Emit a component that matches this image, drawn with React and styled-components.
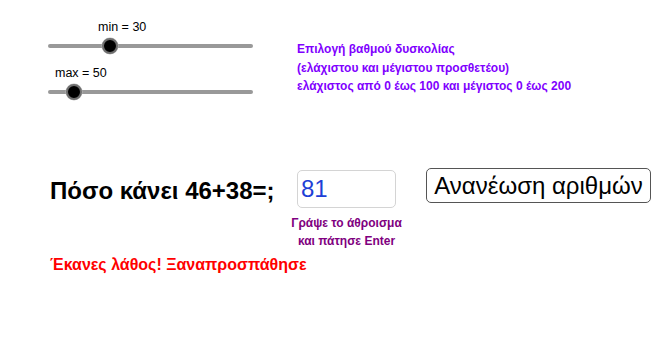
import React from "react";
import styled, { createGlobalStyle } from "styled-components";

const GlobalStyle = createGlobalStyle`
  html, body { margin: 0; padding: 0; background: #ffffff; }
  body { font-family: "Liberation Sans", Arial, sans-serif; }
`;

const Page = styled.div`
  width: 671px;
  height: 349px;
  overflow: hidden;
  background: #fff;
  color: #000;
`;

const TopRow = styled.div`
  display: flex;
  align-items: flex-start;
  height: 168px;
  box-sizing: border-box;
  padding-top: 20px;
`;

const SliderPanel = styled.div`
  display: flex;
  flex-direction: column;
  width: 205px;
  margin-left: 48px;
`;

const SliderBlock = styled.div`
  display: flex;
  flex-direction: column;
  margin-top: ${(p) => p.$top || 0}px;
`;

const SliderLabel = styled.div`
  font-size: 12.5px;
  line-height: 15px;
  height: 15px;
  margin-left: ${(p) => p.$indent}px;
  white-space: nowrap;
`;

const TrackArea = styled.div`
  position: relative;
  height: 18px;
  margin-top: 2px;
  display: flex;
  align-items: center;
`;

const Track = styled.div`
  width: 100%;
  height: 4px;
  border-radius: 2px;
  background: #999999;
`;

const Thumb = styled.div`
  position: absolute;
  top: 50%;
  width: 12px;
  height: 12px;
  border-radius: 50%;
  background: #000;
  border: 2.5px solid #6e6e6e;
  box-shadow: 0 0 0 0.5px #bdbdbd;
  transform: translate(-50%, -50%);
`;

const Description = styled.div`
  margin-left: 44px;
  margin-top: 20px;
  color: #7f00ff;
  font-weight: bold;
  font-size: 12px;
  line-height: 18.5px;
  white-space: nowrap;
`;

const QuestionRow = styled.div`
  display: flex;
  align-items: flex-start;
  margin-left: 50px;
`;

const Question = styled.div`
  width: 247px;
  margin-top: 9px;
  font-size: 24px;
  font-weight: bold;
  line-height: 28px;
  white-space: nowrap;
`;

const InputColumn = styled.div`
  display: flex;
  flex-direction: column;
  align-items: center;
  width: 99px;
  margin-top: 2px;
`;

const AnswerBox = styled.div`
  box-sizing: border-box;
  width: 99px;
  height: 38px;
  border: 1px solid #d4d4d4;
  border-radius: 5px;
  padding-left: 3px;
  display: flex;
  align-items: center;
  font-size: 24px;
  color: #1f3fd6;
`;

const Hint = styled.div`
  margin-top: 6px;
  color: #800080;
  font-weight: bold;
  font-size: 12px;
  line-height: 18px;
  text-align: center;
  white-space: nowrap;
`;

const RefreshButton = styled.button`
  box-sizing: border-box;
  margin-left: 30px;
  width: 225px;
  height: 35px;
  padding: 0;
  background: #fff;
  border: 1px solid #555;
  border-radius: 5px;
  font-family: "Liberation Sans", Arial, sans-serif;
  font-size: 24px;
  color: #000;
  white-space: nowrap;
`;

const ErrorText = styled.div`
  margin-left: 50px;
  margin-top: 6px;
  color: #ff0000;
  font-weight: bold;
  font-size: 16px;
  line-height: 18px;
  white-space: nowrap;
`;

const sliders = [
  { label: "min = 30", indent: 50, frac: 0.3, top: 0 },
  { label: "max = 50", indent: 7, frac: 0.125, top: 11 },
];

export default function App() {
  return (
    <>
      <GlobalStyle />
      <Page>
        <TopRow>
          <SliderPanel>
            {sliders.map((s) => (
              <SliderBlock key={s.label} $top={s.top}>
                <SliderLabel $indent={s.indent}>{s.label}</SliderLabel>
                <TrackArea>
                  <Track />
                  <Thumb style={{ left: `${s.frac * 100}%` }} />
                </TrackArea>
              </SliderBlock>
            ))}
          </SliderPanel>
          <Description>
            <div>Επιλογή βαθμού δυσκολίας</div>
            <div>(ελάχιστου και μέγιστου προσθετέου)</div>
            <div>ελάχιστος από 0 έως 100 και μέγιστος 0 έως 200</div>
          </Description>
        </TopRow>
        <QuestionRow>
          <Question>Πόσο κάνει 46+38=;</Question>
          <InputColumn>
            <AnswerBox>81</AnswerBox>
            <Hint>
              <div>Γράψε το άθροισμα</div>
              <div>και πάτησε Enter</div>
            </Hint>
          </InputColumn>
          <RefreshButton>Ανανέωση αριθμών</RefreshButton>
        </QuestionRow>
        <ErrorText>Έκανες λάθος! Ξαναπροσπάθησε</ErrorText>
      </Page>
    </>
  );
}
